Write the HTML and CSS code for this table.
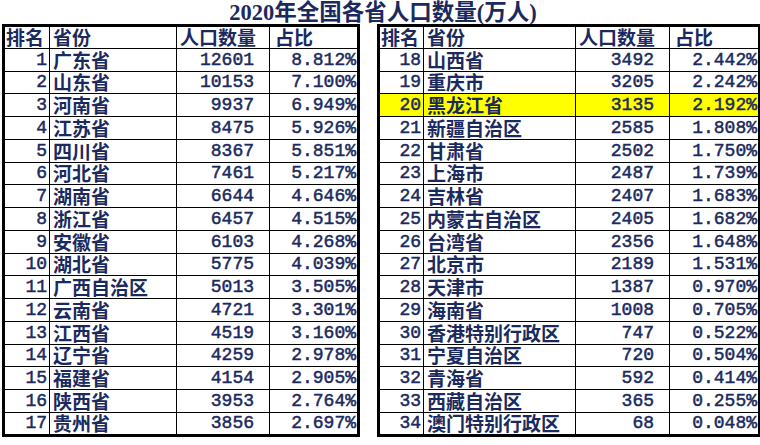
FILE: index.html
```html
<!DOCTYPE html>
<html lang="zh">
<head>
<meta charset="utf-8">
<title>2020年全国各省人口数量</title>
<link rel="stylesheet" href="styles.css">
</head>
<body>
<div class="title">2020年全国各省人口数量(万人)</div>
<div class="tables">
<table class="t t-left">
<colgroup><col class="c-rank-l"><col class="c-name-l"><col class="c-pop-l"><col class="c-pct-l"></colgroup>
<tr class="head"><th class="rank">排名</th><th>省份</th><th class="pop-h">人口数量</th><th class="pct-h">占比</th></tr>
<tr><td class="rank">1</td><td class="name">广东省</td><td class="pop">12601</td><td class="pct">8.812%</td></tr>
<tr><td class="rank">2</td><td class="name">山东省</td><td class="pop">10153</td><td class="pct">7.100%</td></tr>
<tr><td class="rank">3</td><td class="name">河南省</td><td class="pop">9937</td><td class="pct">6.949%</td></tr>
<tr><td class="rank">4</td><td class="name">江苏省</td><td class="pop">8475</td><td class="pct">5.926%</td></tr>
<tr><td class="rank">5</td><td class="name">四川省</td><td class="pop">8367</td><td class="pct">5.851%</td></tr>
<tr><td class="rank">6</td><td class="name">河北省</td><td class="pop">7461</td><td class="pct">5.217%</td></tr>
<tr><td class="rank">7</td><td class="name">湖南省</td><td class="pop">6644</td><td class="pct">4.646%</td></tr>
<tr><td class="rank">8</td><td class="name">浙江省</td><td class="pop">6457</td><td class="pct">4.515%</td></tr>
<tr><td class="rank">9</td><td class="name">安徽省</td><td class="pop">6103</td><td class="pct">4.268%</td></tr>
<tr><td class="rank">10</td><td class="name">湖北省</td><td class="pop">5775</td><td class="pct">4.039%</td></tr>
<tr><td class="rank">11</td><td class="name">广西自治区</td><td class="pop">5013</td><td class="pct">3.505%</td></tr>
<tr><td class="rank">12</td><td class="name">云南省</td><td class="pop">4721</td><td class="pct">3.301%</td></tr>
<tr><td class="rank">13</td><td class="name">江西省</td><td class="pop">4519</td><td class="pct">3.160%</td></tr>
<tr><td class="rank">14</td><td class="name">辽宁省</td><td class="pop">4259</td><td class="pct">2.978%</td></tr>
<tr><td class="rank">15</td><td class="name">福建省</td><td class="pop">4154</td><td class="pct">2.905%</td></tr>
<tr><td class="rank">16</td><td class="name">陕西省</td><td class="pop">3953</td><td class="pct">2.764%</td></tr>
<tr><td class="rank">17</td><td class="name">贵州省</td><td class="pop">3856</td><td class="pct">2.697%</td></tr>
</table>
<table class="t t-right">
<colgroup><col class="c-rank-r"><col class="c-name-r"><col class="c-pop-r"><col class="c-pct-r"></colgroup>
<tr class="head"><th class="rank">排名</th><th>省份</th><th class="pop-h">人口数量</th><th class="pct-h">占比</th></tr>
<tr><td class="rank">18</td><td class="name">山西省</td><td class="pop">3492</td><td class="pct">2.442%</td></tr>
<tr><td class="rank">19</td><td class="name">重庆市</td><td class="pop">3205</td><td class="pct">2.242%</td></tr>
<tr class="hl"><td class="rank">20</td><td class="name">黑龙江省</td><td class="pop">3135</td><td class="pct">2.192%</td></tr>
<tr><td class="rank">21</td><td class="name">新疆自治区</td><td class="pop">2585</td><td class="pct">1.808%</td></tr>
<tr><td class="rank">22</td><td class="name">甘肃省</td><td class="pop">2502</td><td class="pct">1.750%</td></tr>
<tr><td class="rank">23</td><td class="name">上海市</td><td class="pop">2487</td><td class="pct">1.739%</td></tr>
<tr><td class="rank">24</td><td class="name">吉林省</td><td class="pop">2407</td><td class="pct">1.683%</td></tr>
<tr><td class="rank">25</td><td class="name">内蒙古自治区</td><td class="pop">2405</td><td class="pct">1.682%</td></tr>
<tr><td class="rank">26</td><td class="name">台湾省</td><td class="pop">2356</td><td class="pct">1.648%</td></tr>
<tr><td class="rank">27</td><td class="name">北京市</td><td class="pop">2189</td><td class="pct">1.531%</td></tr>
<tr><td class="rank">28</td><td class="name">天津市</td><td class="pop">1387</td><td class="pct">0.970%</td></tr>
<tr><td class="rank">29</td><td class="name">海南省</td><td class="pop">1008</td><td class="pct">0.705%</td></tr>
<tr><td class="rank">30</td><td class="name">香港特别行政区</td><td class="pop">747</td><td class="pct">0.522%</td></tr>
<tr><td class="rank">31</td><td class="name">宁夏自治区</td><td class="pop">720</td><td class="pct">0.504%</td></tr>
<tr><td class="rank">32</td><td class="name">青海省</td><td class="pop">592</td><td class="pct">0.414%</td></tr>
<tr><td class="rank">33</td><td class="name">西藏自治区</td><td class="pop">365</td><td class="pct">0.255%</td></tr>
<tr><td class="rank">34</td><td class="name">澳门特别行政区</td><td class="pop">68</td><td class="pct">0.048%</td></tr>
</table>
</div>
</body>
</html>
```
FILE: styles.css
```css
html, body {
  margin: 0;
  padding: 0;
  background: #ffffff;
}
body {
  width: 760px;
  height: 445px;
  overflow: hidden;
  color: #1b2a5e;
  font-family: "Liberation Serif", "Noto Sans CJK SC", serif;
}
.title {
  height: 24px;
  line-height: 26px;
  text-align: center;
  font-size: 22.5px;
  font-weight: 600;
  padding-left: 6px;
  overflow: hidden;
}
.tables {
  display: flex;
  align-items: flex-start;
  padding-left: 2px;
  gap: 17px;
}
.t {
  border-collapse: collapse;
  border: 3px solid #000;
  table-layout: fixed;
  font-size: 19px;
}
.t-left { width: 355px; }
.t-right { width: 381px; }
.c-rank-l { width: 46px; }
.c-name-l { width: 127px; }
.c-pop-l { width: 93px; }
.c-pct-l { width: 89px; }
.c-rank-r { width: 45px; }
.c-name-r { width: 152px; }
.c-pop-r { width: 94px; }
.c-pct-r { width: 90px; }
.t tr { height: 22.75px; }
.t th, .t td {
  border: 1px solid #000;
  padding: 0 2px;
  line-height: 20px;
  white-space: nowrap;
  overflow: hidden;
  font-family: "Noto Sans CJK SC", sans-serif;
  font-weight: 600;
}
.t th {
  text-align: left;
  padding-left: 3px;
}
.t th.rank { padding-left: 1px; }
.t td.rank, .t td.pop, .t td.pct {
  font-family: "Liberation Mono", "DejaVu Sans Mono", monospace;
  text-align: right;
  font-size: 18px;
  font-weight: normal;
  -webkit-text-stroke: 0.5px #1b2a5e;
}
.t td.rank { padding-right: 2px; }
.t td.name { padding-left: 3px; }
.t td.pop { padding-right: 15px; }
.t td.pct { padding-right: 1px; }
.t th.pct-h { padding-left: 5px; }
.t tr.hl td { background: #ffff00; }
```
